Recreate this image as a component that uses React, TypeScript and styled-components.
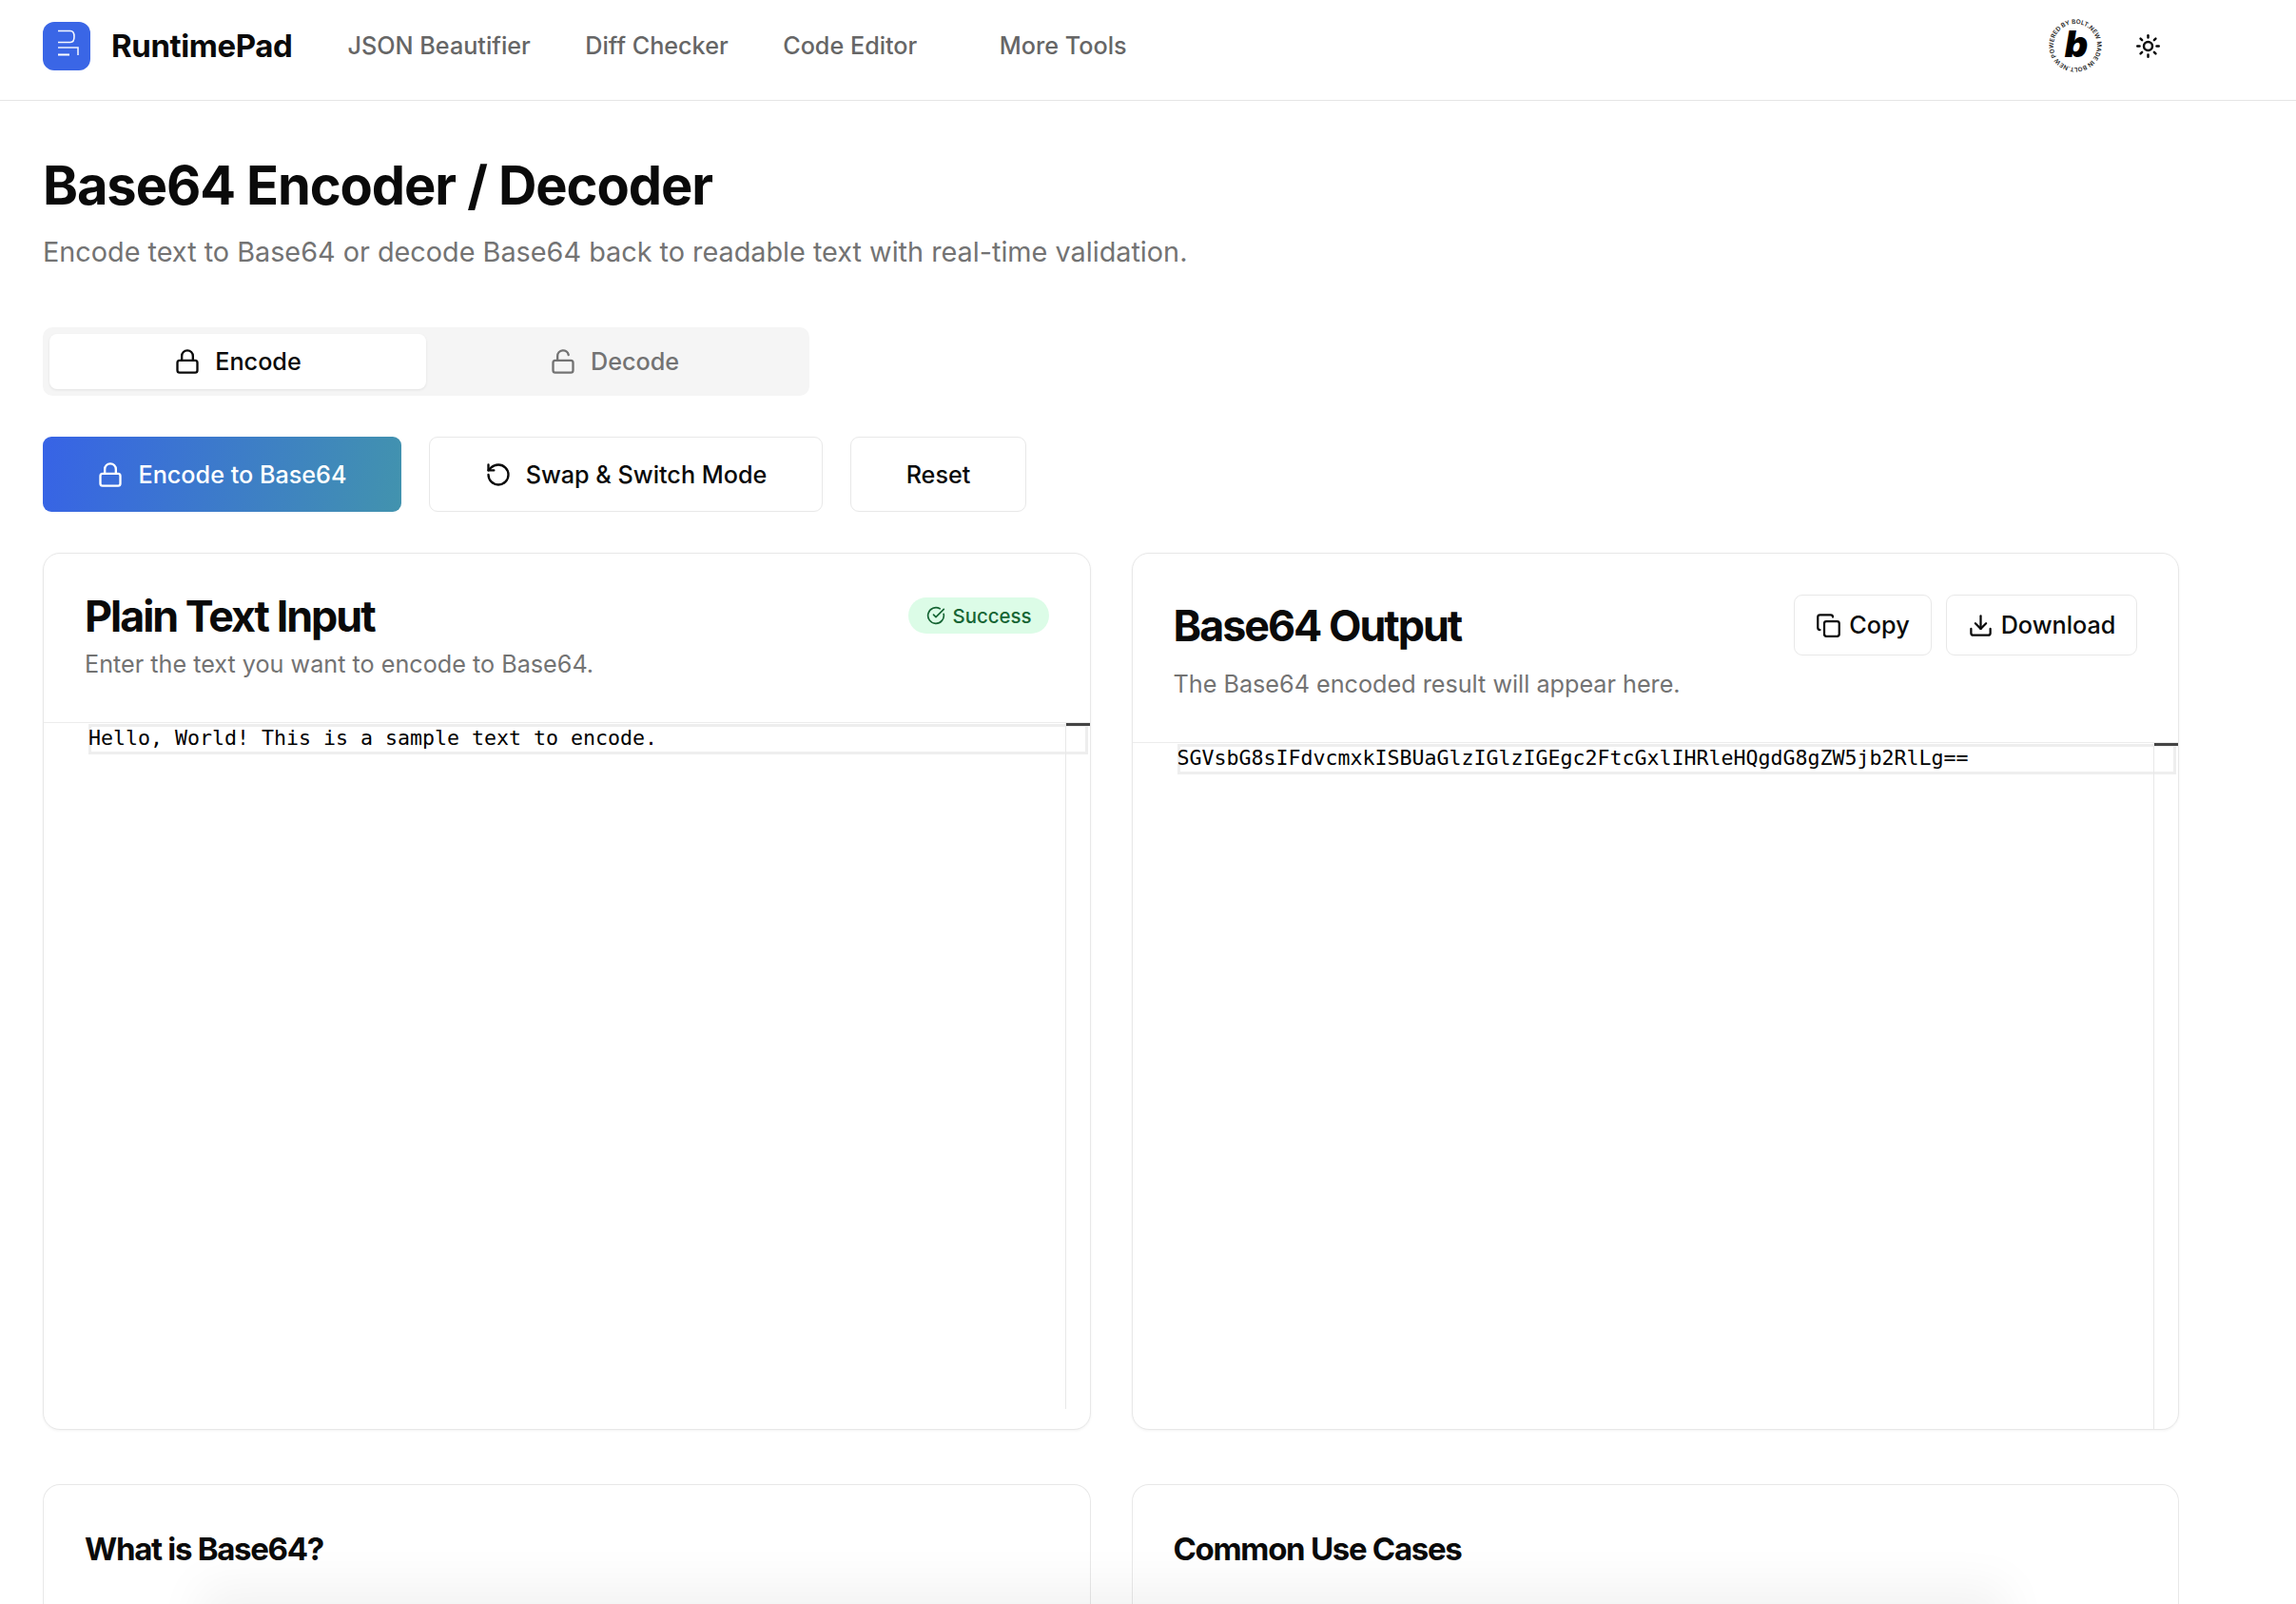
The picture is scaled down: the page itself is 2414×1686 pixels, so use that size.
import styled, { createGlobalStyle } from "styled-components";
import { CircleCheckBig, Copy, Download, Lock, LockOpen, RotateCcw, Sun } from "lucide-react";

const GlobalStyle = createGlobalStyle`
  html, body {
    margin: 0;
    height: 100%;
    overflow: hidden;
    background: #fff;
    color: #0a0a0a;
    font-family: Inter, "Liberation Sans", sans-serif;
  }
  * { box-sizing: border-box; }
`;

const Header = styled.header`
  align-items: center;
  border-bottom: 1.5px solid #e5e5e5;
  display: flex;
  height: 106px;
  padding: 0 142px 9px 45px;
`;

const Brand = styled.div`
  align-items: center;
  display: flex;
  font-size: 33px;
  font-weight: 700;
  gap: 22px;
  letter-spacing: -0.4px;
  margin-right: 58px;
`;

const LogoBox = styled.div`
  align-items: center;
  background: #3a66e6;
  border-radius: 12px;
  display: flex;
  height: 51px;
  justify-content: center;
  width: 50px;
`;

const Nav = styled.nav`
  display: flex;
  gap: 57.5px;
`;

const NavLink = styled.a<{ $extra?: boolean }>`
  color: #666;
  font-size: 25.2px;
  font-weight: 500;
  margin-left: ${(p) => (p.$extra ? "29px" : "0")};
`;

const HeaderRight = styled.div`
  align-items: center;
  display: flex;
  gap: 34px;
  margin-left: auto;
`;

const Main = styled.main`
  padding: 54px 123px 0 45px;
`;

const Title = styled.h1`
  font-size: 56px;
  font-weight: 700;
  letter-spacing: -1.1px;
  line-height: 70px;
  margin: 0;
`;

const Subtitle = styled.p`
  color: #737373;
  font-size: 28.8px;
  line-height: 44px;
  margin: 13px 0 0;
`;

const Tabs = styled.div`
  background: #f5f5f5;
  border-radius: 10px;
  display: grid;
  grid-template-columns: 1fr 1fr;
  height: 72px;
  margin-top: 57px;
  padding: 7px;
  width: 806px;
`;

const Tab = styled.div<{ $active?: boolean }>`
  align-items: center;
  background: ${(p) => (p.$active ? "#fff" : "transparent")};
  border-radius: 8px;
  box-shadow: ${(p) => (p.$active ? "0 1px 3px rgba(0,0,0,.08)" : "none")};
  color: ${(p) => (p.$active ? "#0a0a0a" : "#737373")};
  display: flex;
  font-size: 25.2px;
  font-weight: 500;
  gap: 15px;
  justify-content: center;
`;

const Actions = styled.div`
  display: flex;
  gap: 29px;
  margin-top: 43px;
`;

const Button = styled.button<{ $primary?: boolean; $width: number }>`
  align-items: center;
  background: ${(p) => (p.$primary ? "linear-gradient(100deg, #3763e6, #4293ae)" : "#fff")};
  border: ${(p) => (p.$primary ? "none" : "1.5px solid #e8e8e8")};
  border-radius: 9px;
  color: ${(p) => (p.$primary ? "#fff" : "#0a0a0a")};
  display: flex;
  font-family: inherit;
  font-size: 25.2px;
  font-weight: 500;
  gap: 15px;
  height: 79px;
  justify-content: center;
  padding: 0;
  width: ${(p) => p.$width}px;
`;

const Grid = styled.div<{ $spaced?: boolean }>`
  display: grid;
  gap: 43px;
  grid-template-columns: 1fr 1fr;
  margin-top: ${(p) => (p.$spaced ? "57px" : "43px")};
`;

const Card = styled.section`
  background: #fff;
  border: 1.5px solid #e8e8e8;
  border-radius: 18px;
  box-shadow: 0 1px 3px rgba(0, 0, 0, 0.05);
  overflow: hidden;
`;

const CardHeader = styled.div<{ $tall?: boolean }>`
  height: ${(p) => (p.$tall ? "198px" : "177px")};
  padding: ${(p) => (p.$tall ? "43px" : "38px")} 43px 0;
`;

const CardTopRow = styled.div`
  align-items: center;
  display: flex;
  justify-content: space-between;
`;

const CardTitle = styled.h2`
  font-size: 44.8px;
  font-weight: 700;
  letter-spacing: -2px;
  line-height: 54px;
  margin: 0;
  transform: translateY(1px);
`;

const CardSub = styled.p<{ $wide?: boolean }>`
  color: #737373;
  font-size: 25.2px;
  line-height: 36px;
  margin: ${(p) => (p.$wide ? "12px" : "6px")} 0 0;
`;

const Badge = styled.span`
  align-items: center;
  background: #dcfce7;
  border-radius: 19px;
  color: #166534;
  display: flex;
  font-size: 20.4px;
  font-weight: 500;
  gap: 8px;
  height: 38px;
  padding: 0 18px 0 19px;
`;

const ToolRow = styled.div`
  display: flex;
  gap: 15px;
`;

const ToolButton = styled.button<{ $width: number }>`
  align-items: center;
  background: #fff;
  border: 1.5px solid #e8e8e8;
  border-radius: 9px;
  color: #0a0a0a;
  display: flex;
  font-family: inherit;
  font-size: 25.2px;
  font-weight: 500;
  gap: 8px;
  height: 64px;
  justify-content: center;
  padding: 0;
  width: ${(p) => p.$width}px;
`;

const Editor = styled.div`
  border-top: 1.5px solid #ececec;
  height: 721.5px;
  padding-left: 47px;
  position: relative;
`;

const LineHighlight = styled.div`
  border: 3px solid #eeeeee;
  color: #000;
  font-family: "DejaVu Sans Mono", monospace;
  font-size: 21.6px;
  height: 32px;
  line-height: 24px;
  margin-right: 2px;
  margin-top: 1px;
  text-indent: -3px;
  white-space: pre;
`;

const Ruler = styled.div`
  border-left: 1.5px solid #e8e8e8;
  bottom: 0;
  position: absolute;
  right: 0;
  top: 0;
  width: 26px;
`;

const RulerMark = styled.div`
  background: #444;
  height: 3px;
  width: 100%;
`;

const InfoCard = styled(Card)`
  border-bottom: none;
  box-shadow: none;
  height: 160px;
  padding: 43px;
`;

const InfoTitle = styled.h3`
  font-size: 33px;
  font-weight: 700;
  letter-spacing: -1.3px;
  line-height: 48px;
  margin: 0;
`;

// soft grey glow rising from below the window, lies over the lower cards
const BottomGlow = styled.div`
  background: rgba(0, 0, 0, 0.05);
  bottom: -40px;
  box-shadow: 0 0 50px 20px rgba(0, 0, 0, 0.05);
  height: 40px;
  left: 230px;
  pointer-events: none;
  position: fixed;
  width: 1860px;
`;

const LogoIcon = () => (
  <svg width="30" height="34" viewBox="0 0 30 34" fill="none" stroke="#fff" strokeWidth="1.6">
    <path d="M6 1.5h13c3 0 4 2.5 4 6s-1 6-4 6H6" opacity="0.95" />
    <path d="M6 19h21v8" opacity="0.9" />
    <path d="M6 26.5h12" strokeWidth="2" />
  </svg>
);

const BoltBadge = () => (
  <svg width="58" height="58" viewBox="0 0 58 58">
    <defs>
      <path id="ring" d="M9.08 40.5A23 23 0 1 1 48.92 17.5A23 23 0 1 1 9.08 40.5" />
    </defs>
    <text fontFamily="Inter, sans-serif" fontSize="6.4" fontWeight="600" fill="#222">
      <textPath href="#ring" textLength="142">POWERED BY BOLT.NEW MADE IN BOLT.NEW</textPath>
    </text>
    <text x="30" y="41" textAnchor="middle" fontFamily="Inter, sans-serif" fontSize="38" fontStyle="italic" fontWeight="900" fill="#000">b</text>
  </svg>
);

const App = () => (
  <>
    <GlobalStyle />
    <Header>
      <Brand>
        <LogoBox>
          <LogoIcon />
        </LogoBox>
        RuntimePad
      </Brand>
      <Nav>
        <NavLink>JSON Beautifier</NavLink>
        <NavLink>Diff Checker</NavLink>
        <NavLink>Code Editor</NavLink>
        <NavLink $extra>More Tools</NavLink>
      </Nav>
      <HeaderRight>
        <BoltBadge />
        <Sun size={27} strokeWidth={2.2} />
      </HeaderRight>
    </Header>
    <Main>
      <Title>Base64 Encoder / Decoder</Title>
      <Subtitle>Encode text to Base64 or decode Base64 back to readable text with real-time validation.</Subtitle>
      <Tabs>
        <Tab $active>
          <Lock size={28} />
          Encode
        </Tab>
        <Tab>
          <LockOpen size={28} />
          Decode
        </Tab>
      </Tabs>
      <Actions>
        <Button $primary $width={377}>
          <Lock size={28} />
          Encode to Base64
        </Button>
        <Button $width={414}>
          <RotateCcw size={28} />
          Swap &amp; Switch Mode
        </Button>
        <Button $width={185}>Reset</Button>
      </Actions>
      <Grid>
        <Card>
          <CardHeader>
            <CardTopRow>
              <CardTitle>Plain Text Input</CardTitle>
              <Badge>
                <CircleCheckBig size={20} />
                Success
              </Badge>
            </CardTopRow>
            <CardSub>Enter the text you want to encode to Base64.</CardSub>
          </CardHeader>
          <Editor>
            <LineHighlight>Hello, World! This is a sample text to encode.</LineHighlight>
            <Ruler>
              <RulerMark />
            </Ruler>
          </Editor>
        </Card>
        <Card>
          <CardHeader $tall>
            <CardTopRow>
              <CardTitle>Base64 Output</CardTitle>
              <ToolRow>
                <ToolButton $width={145}>
                  <Copy size={27} />
                  Copy
                </ToolButton>
                <ToolButton $width={201}>
                  <Download size={27} />
                  Download
                </ToolButton>
              </ToolRow>
            </CardTopRow>
            <CardSub $wide>The Base64 encoded result will appear here.</CardSub>
          </CardHeader>
          <Editor>
            <LineHighlight>SGVsbG8sIFdvcmxkISBUaGlzIGlzIGEgc2FtcGxlIHRleHQgdG8gZW5jb2RlLg==</LineHighlight>
            <Ruler>
              <RulerMark />
            </Ruler>
          </Editor>
        </Card>
      </Grid>
      <Grid $spaced>
        <InfoCard>
          <InfoTitle>What is Base64?</InfoTitle>
        </InfoCard>
        <InfoCard>
          <InfoTitle>Common Use Cases</InfoTitle>
        </InfoCard>
      </Grid>
    </Main>
    <BottomGlow />
  </>
);

export default App;
